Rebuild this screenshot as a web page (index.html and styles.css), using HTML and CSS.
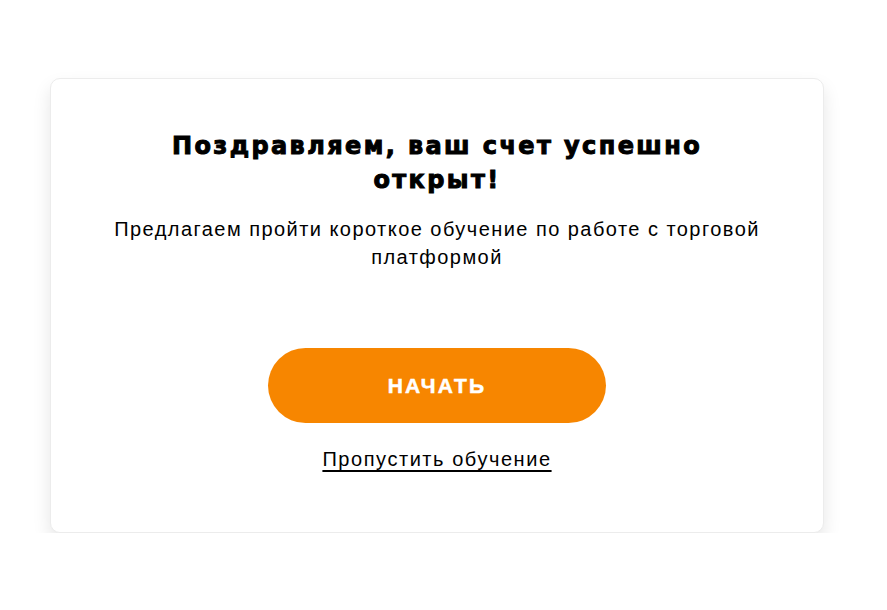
FILE: index.html
```html
<!DOCTYPE html>
<html>
<head>
	<title>Обучение</title>
	<link rel="stylesheet" href="styles.css">
</head>
<body>
	<div class="modal">
		<h1 class="modal-title">Поздравляем, ваш счет успешно открыт!</h1>
		<p class="modal-text">Предлагаем пройти короткое обучение по работе с торговой платформой</p>
		<button class="start-btn" type="button">НАЧАТЬ</button>
		<a class="skip-link" href="#">Пропустить обучение</a>
	</div>
</body>
</html>
```

FILE: styles.css
```css
body {
	margin: 0;
	background-color: #fff;
	font-family: "Liberation Sans", Arial, sans-serif;
	color: #000;
}

.modal {
	width: 774px;
	height: 455px;
	box-sizing: border-box;
	margin: 78px 0 0 50px;
	padding: 50px 40px 0;
	background-color: #fff;
	border: 1px solid #ececec;
	border-radius: 10px;
	box-shadow: 0 9px 18px rgba(0, 0, 0, 0.1);
	display: flex;
	flex-direction: column;
	align-items: center;
	text-align: center;
}

.modal-title {
	max-width: 600px;
	margin: 0 0 18px;
	font-family: "DejaVu Sans", sans-serif;
	font-size: 24px;
	line-height: 34px;
	font-weight: 700;
	-webkit-text-stroke: 1px #000;
	letter-spacing: 2.4px;
}

.modal-text {
	margin: 0;
	font-size: 20px;
	line-height: 28px;
	letter-spacing: 1.45px;
}

.start-btn {
	width: 338px;
	height: 75px;
	margin-top: 77px;
	background-color: #f78600;
	color: #fff;
	border: none;
	border-radius: 38px;
	font-family: "Liberation Sans", Arial, sans-serif;
	font-size: 21px;
	font-weight: 700;
	letter-spacing: 2.2px;
	-webkit-text-stroke: 0.5px #fff;
	cursor: pointer;
}

.skip-link {
	margin-top: 22px;
	font-size: 20px;
	line-height: 28px;
	letter-spacing: 1.55px;
	color: #000;
	text-decoration: underline;
	text-underline-offset: 4px;
}
```
